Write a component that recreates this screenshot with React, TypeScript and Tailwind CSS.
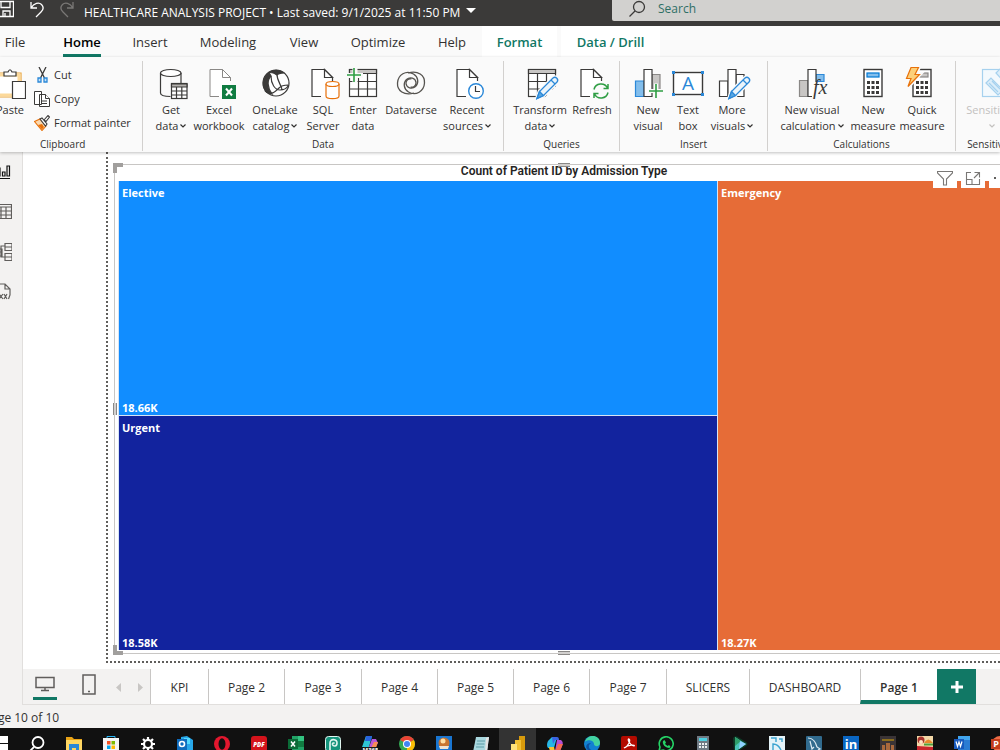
import React from "react";

const ink = "#3b3a39";

function Svg({ children }: { children: React.ReactNode }) {
  return (
    <svg
      viewBox="0 0 32 32"
      className="size-8 shrink-0 overflow-visible"
      fill="none"
      stroke={ink}
      strokeWidth="1.2"
      aria-hidden="true"
    >
      {children}
    </svg>
  );
}

function Doc() {
  return (
    <>
      <path d="M6 2.5h12.500l8 8V30H6z" fill="#fff" stroke="none" />
      <path d="M15 29.500H6V2.500h12.500l8 8V14" />
      <path d="M18.500 2.500v8h8z" fill="#fff" />
    </>
  );
}

function Pencil() {
  return (
    <g stroke="#2b88d8" strokeWidth="1.300">
      <path d="M13 32l2.500-7.500L29 11q2-1.500 3.800.2t.2 3.800L19.500 28.500z" fill="#f3f9fd" stroke="#fafafa" strokeWidth="4" />
      <path d="M13 31.500l2.500-7L29 11q2-1.500 3.800.2t.2 3.800L19.500 28.500z" fill="#eaf4fb" />
      <path d="M13 31.500l2.500-7 4 4z" fill="#5ba7e0" />
      <path d="M27 13l4 4" />
    </g>
  );
}

function Plus({ x, y }: { x: number; y: number }) {
  return <path d={`M${x - 7} ${y}h14M${x} ${y - 7}v14`} stroke="#2f9e44" strokeWidth="1.600" />;
}

function Calc() {
  const rows = [14, 19, 24];
  const cols = [10, 14.5, 19];
  return (
    <>
      <rect x="7" y="2.500" width="18" height="27" fill="#fff" strokeWidth="1.400" />
      {rows.map((y) =>
        cols.map((x) => <rect key={`${x}-${y}`} x={x} y={y} width="3" height="3" fill={ink} stroke="none" />)
      )}
    </>
  );
}

const icons = {
  getData: (
    <Svg>
      <path d="M5.500 6v20c0 2 4 3.500 10 3.500M26 6v11" />
      <ellipse cx="15.750" cy="6" rx="10.250" ry="3.500" fill="#fff" />
      <rect x="16.500" y="16.500" width="15.500" height="15" fill="#fff" />
      <path d="M16.500 17h15.500v3h-15.500z" fill="#b3b0ad" />
      <path d="M16.500 24h15.500M16.500 28h15.500M21.500 20v11.500M26.800 20v11.500" />
    </Svg>
  ),
  excel: (
    <Svg>
      <g transform="translate(1 0)" strokeWidth="1" stroke="#8a8886"><Doc /></g>
      <rect x="19" y="18" width="14" height="14" fill="#107c41" stroke="none" />
      <path d="M23 21.500l6 7M29 21.500l-6 7" stroke="#fff" strokeWidth="2" />
    </Svg>
  ),
  oneLake: (
    <Svg>
      <circle cx="17" cy="16" r="13" fill="#fff" />
      <path d="M10 5.500A13.200 13.200 0 0 0 8 25.500l5 1.500C8 20 8 13 12 9z" fill={ink} />
      <path d="M10 5.500a13 13 0 0 1 15 .5q-6 .5-7 2-4-3-8-2.500z" fill={ink} />
      <path d="M12 9c0 8 4 14 9 14 4 0 7-2 8.500-4.500M18 7.500c0 6 4 10 5 15M6 24c6 5 10 1 14-3 3-3 6-3 9-3" />
    </Svg>
  ),
  sql: (
    <Svg>
      <g transform="translate(-1 0)"><Doc /></g>
      <path d="M19 17v12c0 3.500 13 3.500 13 0V17" fill="#fff" stroke="#e8710a" />
      <ellipse cx="25.500" cy="17" rx="6.500" ry="2.500" fill="#fff" stroke="#e8710a" />
    </Svg>
  ),
  enter: (
    <Svg>
      <rect x="2.500" y="2.500" width="27" height="27" fill="#fff" />
      <path d="M2.500 2.500h27v4h-27z" fill="#c8c6c4" />
      <path d="M2.500 14.500h27M2.500 22h27M11.500 6.500v23M20.500 6.500v23" />
      <path d="M-1 8.500h17M8 0v16" stroke="#fafafa" strokeWidth="5" />
      <Plus x={7} y={8} />
    </Svg>
  ),
  dataverse: (
    <Svg>
      <g stroke="#55534f" strokeWidth="1.300">
        <path d="M19 26C9 29 2 23.500 2.500 16 3 8 11 2.500 18.500 7c5 3 5.500 9 2 12.500-3.500 3-9 1.500-9.500-3-.3-3 2.500-5.500 5.500-4.500" />
        <path d="M13 6C23 3 30 8.500 29.500 16c-.5 8-8.500 13.500-16 9-5-3-5.500-9-2-12.500 3.500-3 9-1.500 9.500 3 .3 3-2.500 5.500-5.500 4.500" />
      </g>
    </Svg>
  ),
  recent: (
    <Svg>
      <Doc />
      <circle cx="25" cy="24" r="7.300" fill="#fff" stroke="#2b88d8" strokeWidth="1.400" />
      <path d="M24.500 19v5.500H29" />
    </Svg>
  ),
  transform: (
    <Svg>
      <rect x="4.500" y="2.500" width="27" height="27" fill="#fff" />
      <path d="M4.500 2.500h27v4h-27z" fill="#c8c6c4" />
      <path d="M4.500 14.500h27M4.500 22h27M13.500 6.500v23M22.500 6.500v23" />
      <path d="M20 31h13V18z" fill="#fafafa" stroke="none" />
      <Pencil />
    </Svg>
  ),
  refresh: (
    <Svg>
      <g transform="translate(-1 0)"><Doc /></g>
      <circle cx="25" cy="24" r="9" fill="#fafafa" stroke="none" />
      <g stroke="#2f9e44" strokeWidth="1.500">
        <path d="M18 22.500c1.500-6.500 10.500-7.500 13.500-1.500M32 17v4.500h-4.500M32 25.500c-1.500 6.500-10.500 7.500-13.500 1.500M18 31v-4.500h4.500" />
      </g>
    </Svg>
  ),
  newVisual: (
    <Svg>
      <path d="M3.500 14h8.500v15.500H3.500z" fill="#83beec" stroke="#2b88d8" />
      <path d="M20 7.500h8v18h-8z" fill="#c8c6c4" stroke="#8a8886" />
      <path d="M12 2.500h8v27h-8z" fill="#fff" />
      <path d="M16.500 24h15M24 16.500v15" stroke="#fafafa" strokeWidth="4" />
      <Plus x={24} y={24} />
    </Svg>
  ),
  textBox: (
    <Svg>
      <rect x="1.500" y="5.500" width="29" height="22" fill="#fff" strokeWidth="1.400" />
      <path d="M0 4h3v3H0zM29 4h3v3h-3zM0 26h3v3H0zM29 26h3v3h-3z" fill="#2b88d8" stroke="none" />
      <text x="16" y="23" textAnchor="middle" fill="#2b88d8" stroke="none" fontSize="19" fontFamily="Open Sans, sans-serif">A</text>
    </Svg>
  ),
  more: (
    <Svg>
      <path d="M3.500 14h8.500v15.500H3.500zM20 7.500h8v22h-8z" fill="#fff" />
      <path d="M12 2.500h8v27h-8z" fill="#fff" />
      <Pencil />
    </Svg>
  ),
  visualCalc: (
    <Svg>
      <path d="M3.500 13.500H12v16H3.500z" fill="#c8c6c4" stroke="#8a8886" />
      <path d="M20 7.500h8v7h-8z" fill="#83beec" stroke="#2b88d8" />
      <path d="M20 15V2.500h-8v27h4" fill="#fff" />
      <text x="17" y="27" fill={ink} stroke="none" fontSize="20" fontStyle="italic" fontFamily="Liberation Serif, serif">fx</text>
    </Svg>
  ),
  measure: (
    <Svg>
      <Calc />
      <rect x="10" y="6" width="12" height="4" fill="#83beec" stroke="#0078d4" />
    </Svg>
  ),
  quick: (
    <Svg>
      <Calc />
      <rect x="14" y="6" width="8" height="4" fill="#c8c6c4" stroke="#8a8886" />
      <path d="M5 0h8l-3 7h4L2 20l3-9H0z" fill="#fcd07a" stroke="#fafafa" strokeWidth="4" />
      <path d="M5 .500h7.500l-3.500 7h4.500L2 19.500 5 11.500H.500z" fill="#fcd07a" stroke="#e8710a" />
    </Svg>
  ),
  sensitivity: (
    <Svg>
      <g stroke="#a6d1ee">
        <rect x="6.500" y="2.500" width="27" height="27" fill="#f3f9fd" />
        <path d="M10 16l5-5 12 12-5 5zM13 16l9 9M16 14l8 8M20 6l4-4 10 10-5 4z" fill="#dceefa" />
      </g>
    </Svg>
  ),
};

type Command = { icon: keyof typeof icons; lines: string[]; width: string; menu?: boolean; off?: boolean };
type Group = { name: string; width: string; pad: string; items: Command[] };

const groups: Group[] = [
  {
    name: "Data",
    width: "w-[361px]",
    pad: "pl-1",
    items: [
      { icon: "getData", lines: ["Get", "data"], width: "w-12", menu: true },
      { icon: "excel", lines: ["Excel", "workbook"], width: "w-12" },
      { icon: "oneLake", lines: ["OneLake", "catalog"], width: "w-16", menu: true },
      { icon: "sql", lines: ["SQL", "Server"], width: "w-8" },
      { icon: "enter", lines: ["Enter", "data"], width: "w-12" },
      { icon: "dataverse", lines: ["Dataverse"], width: "w-12" },
      { icon: "recent", lines: ["Recent", "sources"], width: "w-16", menu: true },
    ],
  },
  {
    name: "Queries",
    width: "w-[116px]",
    pad: "pl-2",
    items: [
      { icon: "transform", lines: ["Transform", "data"], width: "w-14", menu: true },
      { icon: "refresh", lines: ["Refresh"], width: "w-12" },
    ],
  },
  {
    name: "Insert",
    width: "w-[148px]",
    pad: "pl-2",
    items: [
      { icon: "newVisual", lines: ["New", "visual"], width: "w-10" },
      { icon: "textBox", lines: ["Text", "box"], width: "w-10" },
      { icon: "more", lines: ["More", "visuals"], width: "w-12", menu: true },
    ],
  },
  {
    name: "Calculations",
    width: "w-[188px]",
    pad: "pl-2",
    items: [
      { icon: "visualCalc", lines: ["New visual", "calculation"], width: "w-[72px]", menu: true },
      { icon: "measure", lines: ["New", "measure"], width: "w-[50px]" },
      { icon: "quick", lines: ["Quick", "measure"], width: "w-12" },
    ],
  },
  {
    name: "Sensitivity",
    width: "w-[70px]",
    pad: "pl-1",
    items: [{ icon: "sensitivity", lines: ["Sensitivity", ""], width: "w-16", menu: true, off: true }],
  },
];

function Chevron() {
  return (
    <svg viewBox="0 0 6 4" className="h-1 w-1.5 shrink-0" fill="none" stroke="currentColor" strokeWidth="1.200" aria-hidden="true">
      <path d="M.500.500L3 3 5.500.500" />
    </svg>
  );
}

function CommandButton({ icon, lines, width, menu, off }: Command) {
  return (
    <button
      disabled={off}
      className={`flex shrink-0 flex-col items-center whitespace-nowrap text-[11px] leading-4 ${width} ${off ? "text-[#c3c1bf]" : ""}`}
    >
      {icons[icon]}
      <span className="mt-[3px]">{lines[0]}</span>
      {lines.length > 1 && (
        <span className="flex h-4 items-center gap-0.5">
          {lines[1]}
          {menu && <Chevron />}
        </span>
      )}
    </button>
  );
}

function TitleBar() {
  return (
    <header className="flex h-[26px] shrink-0 justify-between bg-[#3b3a39] text-white">
      <div className="flex min-w-0 items-start">
        <button aria-label="Save" className="-ml-1 w-[18px]">
          <svg viewBox="0 0 18 18" className="size-[18px]" fill="none" stroke="#fff" strokeWidth="1.300">
            <path d="M1 1.500h16.500v15H4L1 14zM5 1.500v6h9v-6M7 16v-5h7v5M9 13v3" />
          </svg>
        </button>
        <button aria-label="Undo" className="ml-[15px] w-4">
          <svg viewBox="0 0 16 18" className="h-[18px] w-4" fill="none" stroke="#fff" strokeWidth="1.300">
            <path d="M2 2v6h6M2 8c3-5 8-6 10.500-3.500C15 7 14 10 12 12l-5 5" />
          </svg>
        </button>
        <button aria-label="Redo" className="ml-[14px] w-4">
          <svg viewBox="0 0 16 18" className="h-[18px] w-4" fill="none" stroke="#7a7876" strokeWidth="1.300">
            <path d="M14 2v6H8M14 8c-3-5-8-6-10.500-3.500C1 7 2 10 4 12l5 5" />
          </svg>
        </button>
        <button className="ml-[9px] flex items-center gap-1.5 whitespace-nowrap text-xs leading-[26px]">
          HEALTHCARE ANALYSIS PROJECT • Last saved: 9/1/2025 at 11:50 PM
          <svg viewBox="0 0 10 5" className="mb-1.5 h-[5px] w-2.5" fill="#fff" aria-hidden="true">
            <path d="M0 0h10L5 5z" />
          </svg>
        </button>
      </div>
      <label className="flex h-[21px] w-[388px] shrink-0 items-center gap-3 rounded-bl-xs bg-[#d2d1cf] pb-1 pl-4">
        <svg viewBox="0 0 18 18" className="size-[18px]" fill="none" stroke="#3b3a39" strokeWidth="1.300" aria-hidden="true">
          <circle cx="11" cy="7" r="5.500" />
          <path d="M7 11l-5.500 5.500" />
        </svg>
        <input
          aria-label="Search"
          placeholder="Search"
          className="min-w-0 flex-1 bg-transparent text-xs text-[#2f6f66] outline-none placeholder:text-[#2f6f66]"
        />
      </label>
    </header>
  );
}

function RibbonTabs() {
  const tabs = [
    { name: "File", cls: "w-[30px]" },
    { name: "Home", cls: "w-[104px] font-semibold text-black" },
    { name: "Insert", cls: "w-8" },
    { name: "Modeling", cls: "w-[124px]" },
    { name: "View", cls: "w-7" },
    { name: "Optimize", cls: "w-[120px]" },
    { name: "Help", cls: "w-7" },
  ];
  return (
    <nav className="flex h-[31px] shrink-0 items-start bg-[#fafafa] text-[13px] leading-8">
      {tabs.map((t) => (
        <button key={t.name} className={`flex h-[31px] shrink-0 flex-col items-center ${t.cls}`}>
          <span className={t.name === "Home" ? "h-[31px] border-b-3 border-[#117865]" : ""}>{t.name}</span>
        </button>
      ))}
      <button className="ml-4 h-[31px] w-[75px] shrink-0 bg-white font-semibold text-[#117865]">Format</button>
      <button className="ml-1 h-[31px] w-[99px] shrink-0 bg-white font-semibold text-[#117865]">Data / Drill</button>
    </nav>
  );
}

function Ribbon() {
  return (
    <div className="z-10 flex h-[95px] shrink-0 bg-[#fafafa] pb-px pt-1 shadow-[0_1px_3px_rgba(0,0,0,0.25)]">
      <section className="flex w-[143px] shrink-0 flex-col border-r border-[#d2d0ce]">
        <div className="flex flex-1 gap-2 pt-1.5">
          <button className="-ml-1.5 flex w-8 shrink-0 flex-col items-end text-[11px] leading-4">
            <svg viewBox="0 0 32 32" className="size-8 shrink-0" fill="none" stroke={ink} strokeWidth="1.200" aria-hidden="true">
              <path d="M0 6h27v24H0z" fill="#fff" stroke="#e8a33d" />
              <path d="M2 8h23v20H2z" fill="#fff" stroke="#fcd99a" strokeWidth="3" />
              <path d="M10 9V5h4q2-4.500 4 0h4v4z" fill="#fff" />
              <path d="M18.500 14.500h13v17h-13z" fill="#fff" />
            </svg>
            <span className="mr-0.5 mt-[3px]">Paste</span>
          </button>
          <div className="flex flex-col text-[11px] leading-6">
            <button className="-mt-1 flex h-6 items-center gap-1">
              <svg viewBox="0 0 16 16" className="size-4" fill="none" stroke={ink} strokeWidth="1.300" aria-hidden="true">
                <path d="M5 0l5.500 11M12 0L6.500 11" />
                <path d="M4 11h3v4H4zM10 11h3v4h-3z" fill="#c7e3f7" stroke="#2b88d8" />
              </svg>
              Cut
            </button>
            <button className="flex h-6 items-center gap-1">
              <svg viewBox="0 0 16 16" className="size-4" fill="#fff" stroke={ink} aria-hidden="true">
                <path d="M.500.500h7v13h-7zM5.500 3.500h6l4 4v8h-10z" />
                <path d="M11.500 3.500v4h4M8 10h5M8 12.500h5" />
              </svg>
              Copy
            </button>
            <button className="flex h-6 items-center gap-1 whitespace-nowrap">
              <svg viewBox="0 0 16 16" className="size-4" fill="none" stroke={ink} strokeWidth="1.100" aria-hidden="true">
                <path d="M.500 6.500L6 4l6 7-4 4.500z" fill="#fbd9b0" stroke="#e8710a" />
                <path d="M4 10l4-1 2 3-2 2.500z" fill="#e8710a" stroke="none" />
                <path d="M6 4l2-1 5 6-1.500 2zM10 5l4-4.500 1.500 1.500L12 6.500z" fill="#fff" />
              </svg>
              Format painter
            </button>
          </div>
        </div>
        <h2 className="pl-10 text-[10px] leading-[14px]">Clipboard</h2>
      </section>
      {groups.map((g) => (
        <section key={g.name} className={`flex shrink-0 flex-col border-r border-[#d2d0ce] ${g.width}`}>
          <div className={`flex flex-1 items-start pt-1.5 ${g.pad}`}>
            {g.items.map((c) => (
              <CommandButton key={c.lines.join(" ")} {...c} />
            ))}
          </div>
          <h2 className="text-center text-[10px] leading-[14px]">{g.name}</h2>
        </section>
      ))}
    </div>
  );
}

function SideRail() {
  const views = [
    { name: "Report view", d: "M0 15.500h14M2 5h2v8H2zM6.500 9H9v4H6.500zM11 3h2.500v10H11z", color: "#111" },
    { name: "Table view", d: "M0 1.500h15.500v14H0zM0 4h15.500M0 8h15.500M0 12h15.500M5 4v11.500M10 4v11.500", color: "#605e5c" },
    { name: "Model view", d: "M9 .500h7v7H9zM9 10.500h7v7H9zM9 4h7M9 14h7M9 3H5v11h4M1 6h5v7H1zM1 9h5", color: "#605e5c" },
    { name: "DAX query view", d: "M1 1h8l5 5v6l-1.500 4M9 1v5h5M3 11l4 5M7 11l-4 5M8 11l3 5M11 11l-3 5", color: "#605e5c" },
  ];
  return (
    <aside className="flex w-[23px] shrink-0 flex-col border-r border-[#e1dfdd] bg-[#f3f2f1] pt-[11px]">
      {views.map((v) => (
        <button key={v.name} aria-label={v.name} className="-ml-1 flex h-10 w-4 items-start">
          <svg viewBox="0 0 16 18" className="h-[18px] w-4 shrink-0" fill="none" stroke={v.color} strokeWidth="1.200">
            <path d={v.d} />
          </svg>
        </button>
      ))}
    </aside>
  );
}

function Leaf({ name, value, color }: { name: string; value: string; color: string }) {
  return (
    <div className={`flex flex-col justify-between px-[3px] pt-1 text-[11px] font-bold leading-4 text-white ${color}`}>
      <span>{name}</span>
      <span className="leading-[14px]">{value}</span>
    </div>
  );
}

function ReportCanvas() {
  return (
    <main className="flex min-h-0 flex-1 overflow-hidden bg-white pb-1.5 pl-[83px]">
      <div className="flex min-w-0 flex-1 border-b-2 border-l-2 border-dotted border-[#605e5c] pb-[7px] pl-1.5 pt-3">
        <figure className="relative -mr-[14px] flex min-w-0 flex-1 flex-col border border-[#c8c6c4] px-[3px] pb-[3px]">
          <figcaption className="pb-[3px] text-center font-[Roboto,sans-serif] text-xs font-semibold leading-[13px] text-[#252423]">
            Count of Patient ID by Admission Type
          </figcaption>
          <div className="grid min-h-0 flex-1 grid-cols-[598fr_292fr] gap-px border-l border-[#d6e4f5] bg-[#d6e4f5]">
            <div className="grid grid-rows-2 gap-px">
              <Leaf name="Elective" value="18.66K" color="bg-[#118dff]" />
              <Leaf name="Urgent" value="18.58K" color="bg-[#12239e]" />
            </div>
            <Leaf name="Emergency" value="18.27K" color="bg-[#e66c37]" />
          </div>
          <div className="absolute -left-0.5 -top-0.5 size-2.5 border-l-4 border-t-4 border-[#a19f9d]" />
          <div className="absolute -bottom-0.5 -left-0.5 size-2.5 border-b-4 border-l-4 border-[#a19f9d]" />
          <div className="absolute -top-0.5 left-1/2 h-1 w-3 -translate-x-1/2 border-y border-[#8a8886] bg-[#d2d0ce]" />
          <div className="absolute -bottom-0.5 left-1/2 h-1 w-3 -translate-x-1/2 border-y border-[#8a8886] bg-[#d2d0ce]" />
          <div className="absolute -left-0.5 top-1/2 h-3 w-1 -translate-y-1/2 border-x border-[#8a8886] bg-[#d2d0ce]" />
          <div className="absolute right-0 top-[3px] flex gap-1">
            <button aria-label="Filters" className="flex h-5 w-6 items-center justify-center bg-white">
              <svg viewBox="0 0 16 16" className="size-4" fill="none" stroke="#797775" strokeWidth="1.100">
                <path d="M.500 1.500h15v1.500l-6 6v6h-3V9l-6-6z" />
              </svg>
            </button>
            <button aria-label="Focus mode" className="flex h-5 w-6 items-center justify-center bg-white">
              <svg viewBox="0 0 16 16" className="size-4" fill="none" stroke="#797775" strokeWidth="1.100">
                <path d="M6 2.500H1.500v12h13V9M1.500 9.500H7v5M9.500 2.500h5v5M14.500 2.500L9 8" />
              </svg>
            </button>
            <button aria-label="More options" className="flex h-5 w-6 items-center justify-center bg-white">
              <svg viewBox="0 0 16 16" className="size-4" fill="#605e5c">
                <path d="M1 7h2v2H1zM7 7h2v2H7zM13 7h2v2h-2z" />
              </svg>
            </button>
          </div>
        </figure>
      </div>
    </main>
  );
}

function PageTabs() {
  const pages = [
    { name: "KPI", width: "w-[58px]" },
    { name: "Page 2", width: "w-[76px]" },
    { name: "Page 3", width: "w-[77px]" },
    { name: "Page 4", width: "w-[76px]" },
    { name: "Page 5", width: "w-[76px]" },
    { name: "Page 6", width: "w-[76px]" },
    { name: "Page 7", width: "w-[77px]" },
    { name: "SLICERS", width: "w-[83px]" },
    { name: "DASHBOARD", width: "w-[111px]" },
  ];
  return (
    <div className="flex h-9 shrink-0 border-b border-[#e1dfdd] bg-[#f3f2f1] text-xs text-[#323130]">
      <div className="flex w-[127px] shrink-0 items-start pl-2.5">
        <button aria-label="Desktop layout" className="flex h-[31px] w-6 flex-col items-center border-b-3 border-[#117865] pt-[7px]">
          <svg viewBox="0 0 20 16" className="h-4 w-5" fill="none" stroke="#605e5c" strokeWidth="1.500">
            <path d="M1 1.500h18v10H1zM10 11.500v3M6 14.500h8" />
          </svg>
        </button>
        <button aria-label="Mobile layout" className="ml-[25px] pt-[5px]">
          <svg viewBox="0 0 14 21" className="h-[21px] w-3.5" fill="none" stroke="#605e5c" strokeWidth="1.500">
            <path d="M1 1h12v19H1zM6 17.500h2" />
          </svg>
        </button>
        <button aria-label="Previous page" className="ml-5 pt-3.5">
          <svg viewBox="0 0 5 9" className="h-[9px] w-[5px]" fill="#c8c6c4"><path d="M5 0v9L0 4.500z" /></svg>
        </button>
        <button aria-label="Next page" className="ml-[17px] pt-3.5">
          <svg viewBox="0 0 5 9" className="h-[9px] w-[5px]" fill="#c8c6c4"><path d="M0 0v9l5-4.500z" /></svg>
        </button>
      </div>
      {pages.map((p) => (
        <button key={p.name} className={`shrink-0 border-l border-[#c8c6c4] bg-white pt-0.5 ${p.width}`}>
          {p.name}
        </button>
      ))}
      <button className="w-[77px] shrink-0 border-b-4 border-l border-b-[#117865] border-l-[#c8c6c4] bg-white pt-1.5 font-semibold">
        Page 1
      </button>
      <button aria-label="New page" className="flex w-[39px] shrink-0 items-center justify-center bg-[#117865]">
        <svg viewBox="0 0 12 12" className="size-3" stroke="#fff" strokeWidth="3"><path d="M6 0v12M0 6h12" /></svg>
      </button>
    </div>
  );
}

const apps: { name: string; art: React.ReactNode; active?: boolean }[] = [
  { name: "Start", art: <path d="M0 1h7v6H0zM8 0h8v7H8zM0 8h7v7H0zM8 8h8v8H8z" fill="#fff" /> },
  { name: "Search", art: <g fill="none" stroke="#fff" strokeWidth="1.800"><circle cx="9" cy="6.500" r="5.500" /><path d="M5 11l-5 5" /></g> },
  { name: "Files", art: <><path d="M0 1h6l2 2h8v13H0z" fill="#e8a317" /><path d="M0 4h16v12H0z" fill="#ffd763" /><path d="M3 8h10v8h-3v-4H6v4H3z" fill="#2b88d8" /></> },
  { name: "Store", art: <><path d="M4 3V.500h8V3" fill="none" stroke="#29b6f6" /><path d="M0 2h16v14H0z" fill="#f5f5f5" /><path d="M4 5h3.500v3.500H4z" fill="#f25022" /><path d="M8.500 5H12v3.500H8.500z" fill="#7fba00" /><path d="M4 9.500h3.500V13H4z" fill="#00a4ef" /><path d="M8.500 9.500H12V13H8.500z" fill="#ffb900" /></> },
  { name: "Settings", art: <g fill="none" stroke="#fff"><circle cx="8" cy="8" r="4" strokeWidth="2.200" /><path d="M8 1v3M8 12v3M1 8h3M12 8h3M3 3l2 2M11 11l2 2M13 3l-2 2M5 11l-2 2" strokeWidth="2.200" /></g> },
  { name: "Outlook", art: <><path d="M4 1l6-1 6 4v12H4z" fill="#28a8ea" /><path d="M7 2h6v6H7z" fill="#50d9ff" /><path d="M0 3h10v11H0z" fill="#0f6cbd" /><circle cx="5" cy="8" r="2.500" fill="none" stroke="#fff" strokeWidth="1.600" /></> },
  { name: "Opera", art: <><circle cx="8" cy="8" r="8" fill="#e3172e" /><ellipse cx="8" cy="8" rx="3.500" ry="5.800" fill="#111" /></> },
  { name: "PDF", art: <><rect width="16" height="16" rx="3" fill="#d4131b" /><text x="8" y="10.500" textAnchor="middle" fontSize="6" fontWeight="800" fontStyle="italic" fill="#fff" fontFamily="Open Sans, sans-serif">PDF</text></> },
  { name: "Excel", art: <><path d="M4 0h12v16H4z" fill="#21a366" /><path d="M10 0h6v5h-6z" fill="#33c481" /><path d="M10 5h6v6h-6z" fill="#107c41" /><path d="M0 3h10v10H0z" fill="#0b6b37" /><path d="M3 5.500l4 5M7 5.500l-4 5" stroke="#fff" strokeWidth="1.500" /></> },
  { name: "Camtasia", art: <><rect x=".500" y=".500" width="15" height="15" rx="3" fill="#15947c" stroke="#e1f5f0" /><path d="M5 15V7c0-5 7-4 7 0s-4 3.500-4.500 1.500C7.200 7 9 6.500 9.500 7.500" fill="none" stroke="#e1f5f0" strokeWidth="1.600" /></> },
  { name: "M365 Copilot", art: <><path d="M4 0h6L7 11H0z" fill="#2ec4d6" /><path d="M4 0h6L9 5H3z" fill="#2864dc" /><path d="M10 3h4l2 4-3 4H7z" fill="#b858d8" /><path d="M12 6h4l-2 6H9z" fill="#f78d53" /><path d="M2 11h13v5H2z" fill="#1c1c1c" /><text x="8.500" y="16" textAnchor="middle" fontSize="6" fontWeight="700" fill="#fff" fontFamily="Open Sans, sans-serif">M365</text></> },
  { name: "Chrome", art: <><circle cx="8" cy="8" r="8" fill="#34a853" /><path d="M8 8L1.100 4a8 8 0 0 1 13.800 0z" fill="#ea4335" /><path d="M8 8l6.900-4A8 8 0 0 1 8 16z" fill="#fbbc04" /><circle cx="8" cy="8" r="4" fill="#fff" /><circle cx="8" cy="8" r="3" fill="#4285f4" /></> },
  { name: "Burger", art: <><path d="M0 0h16v16H0z" fill="#1976d2" /><circle cx="8" cy="7" r="5.500" fill="#c9752f" /><circle cx="7" cy="5" r="2.500" fill="#ffe0a3" /><path d="M3 10h10l-1 3H4z" fill="#efe3d0" /></> },
  { name: "Notepad", art: <><path d="M3 1h13l-2 15H0z" fill="#a9d8df" /><path d="M13 2l3-1-2 15h-2z" fill="#e4e4e4" /><path d="M4 5h8M3.500 8h8M3 11h8" stroke="#5c9ca6" /></> },
  { name: "Power BI", active: true, art: <><path d="M9 0h6v16H9z" fill="#d89b0c" /><path d="M5 4h6v12H5z" fill="#f2c033" /><path d="M1 8h6v8H1z" fill="#ffe27a" /></> },
  { name: "Copilot", art: <><path d="M5 1h5L7 12H1q-2-3 0-7z" fill="#27b7e5" /><path d="M5 1h5q2 0 2 3H8L6 8z" fill="#3a63e0" /><path d="M10 4h4q3 2 1 6l-2 5H8z" fill="#b64fd5" /><path d="M2 11h5l1 4H5q-3 0-3-4z" fill="#f7c331" /><path d="M11 8h5l-3 7H8z" fill="#f66a4f" /></> },
  { name: "Edge", art: <><circle cx="8" cy="8" r="8" fill="#1281d2" /><path d="M1 6C3-2 16-2 16 7c0 4-6 4-6 1 0-4-7-5-9-2z" fill="#42d2a1" /><path d="M5 9c-1 4 3 7 8 5-3 3-8 2-10-1s0-6 4-6z" fill="#0c4f9e" /></> },
  { name: "Acrobat", art: <><rect width="16" height="16" rx="2" fill="#b30b00" /><path d="M3 12c4-1 7-8 5-9s0 6 5 7c2-1-5-2-10 2z" fill="none" stroke="#fff" strokeWidth="1.200" /></> },
  { name: "WhatsApp", art: <><path d="M1 15l1-4a7 7 0 1 1 3 3z" fill="none" stroke="#25d366" strokeWidth="1.600" /><path d="M5 5l1.500-1 1.500 2.500L7 8l2.500 2 1.500-1 1.500 1.500-1 1.500C7 12 4 8 5 5z" fill="#25d366" /></> },
  { name: "Calculator", art: <><path d="M2 0h12v16H2z" fill="#6f7a84" /><path d="M4 2h8v3H4z" fill="#4dd0e1" /><path d="M4 7h2v2H4zM7 7h2v2H7zM10 7h2v2h-2zM4 10h2v2H4zM7 10h2v2H7zM10 10h2v2h-2z" fill="#eceff1" /></> },
  { name: "Play", art: <><path d="M1 2q2-3 5-1l8 5q3 2 0 4l-9 6H2z" fill="#0d3a26" /><path d="M3 1l11 7-11 8z" fill="#49c5b6" /><path d="M3 1l6 4-6 5z" fill="#2f9e6a" /><path d="M8 5l6 3-7 5z" fill="#8fd0ff" /></> },
  { name: "Workbench", art: <><path d="M0 0h16v16H0z" fill="#e5f3f8" /><path d="M2 2h5v4M10 3h3v3M4 14V8q5 0 8 6" fill="none" stroke="#3ba3d0" strokeWidth="1.400" /></> },
  { name: "MySQL", art: <><rect width="16" height="16" rx="1" fill="#316b8e" /><path d="M2 2c5 0 8 5 9 9l3 2-2 1M4 5l2 8 2-2" fill="none" stroke="#dceaf2" strokeWidth="1.200" /></> },
  { name: "LinkedIn", art: <><path d="M0 0h16v16H0z" fill="#0a66c2" /><text x="8" y="13" textAnchor="middle" fontSize="13" fontWeight="700" fill="#fff" fontFamily="Open Sans, sans-serif">in</text></> },
  { name: "Team", art: <><path d="M0 0h16v16H0z" fill="#3a3436" /><path d="M2 3h12v2H2z" fill="#8a6d1d" /><path d="M2 9h3v7H2zM6 7h4v9H6zM11 9h3v7h-3z" fill="#a8683c" /></> },
  { name: "Cooking game", art: <><path d="M0 0h16v16H0z" fill="#f3d9a8" /><circle cx="4" cy="4" r="3.500" fill="#a8322b" /><circle cx="4" cy="6" r="2" fill="#ffe2c4" /><path d="M7 7q4-7 9 0z" fill="#e88a2a" /><path d="M7 7.500h9v2H7z" fill="#4c9f3a" /><path d="M0 10l16 1v5H0z" fill="#c9252d" /></> },
  { name: "Word", art: <><path d="M4 0h12v16H4z" fill="#2b7cd3" /><path d="M4 0h12v4H4z" fill="#41a5ee" /><path d="M0 3h10v10H0z" fill="#185abd" /><path d="M2 5.500l1.500 5L5 6l1.500 4.500 1.500-5" fill="none" stroke="#fff" strokeWidth="1.200" /></> },
  { name: "PowerPoint", art: <><circle cx="9" cy="8" r="8" fill="#ed6c47" /><path d="M0 3h10v10H0z" fill="#c43e1c" /><text x="5" y="11" textAnchor="middle" fontSize="9" fontWeight="700" fill="#fff" fontFamily="Open Sans, sans-serif">P</text></> },
];

function Taskbar() {
  return (
    <footer className="flex h-[22px] shrink-0 overflow-hidden bg-[#111]">
      <div className="-ml-[19px] flex">
        {apps.map((a) => (
          <button
            key={a.name}
            aria-label={a.name}
            className={`flex w-[37px] shrink-0 justify-center pt-2 ${a.active ? "bg-[#333]" : ""}`}
          >
            <svg viewBox="0 0 16 16" className="size-4 shrink-0">{a.art}</svg>
          </button>
        ))}
      </div>
    </footer>
  );
}

export default function App() {
  return (
    <div className="flex h-screen flex-col overflow-hidden bg-[#f3f2f1] font-['Open_Sans',sans-serif] text-[#323130]">
      <TitleBar />
      <RibbonTabs />
      <Ribbon />
      <div className="flex min-h-0 flex-1">
        <SideRail />
        <div className="flex min-w-0 flex-1 flex-col">
          <ReportCanvas />
          <PageTabs />
        </div>
      </div>
      <div className="h-[23px] shrink-0 overflow-hidden text-xs leading-[26px]">
        <p className="-ml-4">Page 10 of 10</p>
      </div>
      <Taskbar />
    </div>
  );
}
